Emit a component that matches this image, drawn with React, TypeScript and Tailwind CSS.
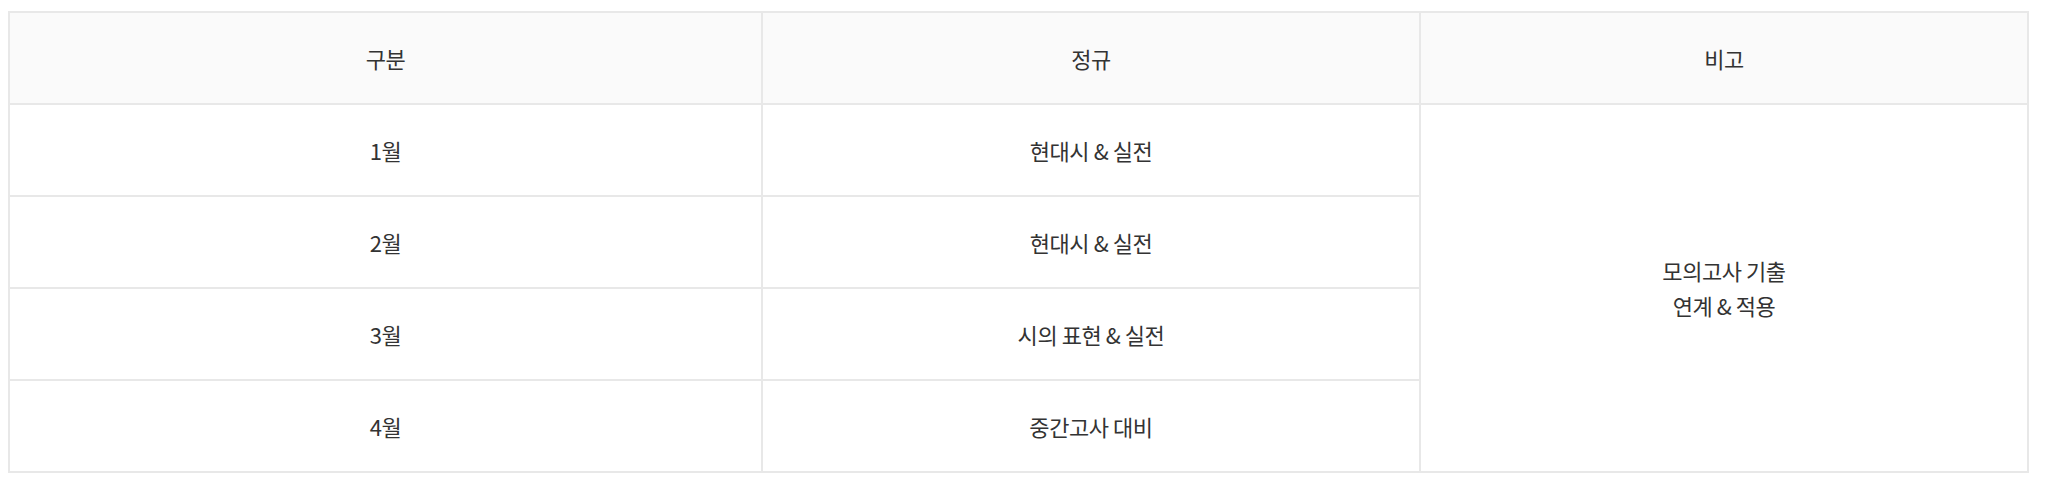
const ROWS = [
  { month: "1월", regular: "현대시 & 실전" },
  { month: "2월", regular: "현대시 & 실전" },
  { month: "3월", regular: "시의 표현 & 실전" },
  { month: "4월", regular: "중간고사 대비" },
];

export default function App() {
  return (
    <div
      className="w-full bg-white pl-[8px] pr-[21px] pt-[11px]"
      style={{ fontFamily: '"Noto Sans CJK KR", "Noto Sans", sans-serif' }}
    >
      <table className="w-[2019px] table-fixed border-collapse border-2 border-[#e8e8e8] text-[22px] leading-[35px] tracking-[-0.02em] text-[#333333]">
        <colgroup>
          <col className="w-[753px]" />
          <col className="w-[658px]" />
          <col className="w-[608px]" />
        </colgroup>
        <thead>
          <tr className="h-[92px] bg-[#fafafa]">
            <th className="border-2 border-[#e8e8e8] font-normal text-center">구분</th>
            <th className="border-2 border-[#e8e8e8] font-normal text-center">정규</th>
            <th className="border-2 border-[#e8e8e8] font-normal text-center">비고</th>
          </tr>
        </thead>
        <tbody>
          {ROWS.map((r, i) => (
            <tr key={r.month} className="h-[92px]">
              <td className="border-2 border-[#e8e8e8] text-center">{r.month}</td>
              <td className="border-2 border-[#e8e8e8] text-center">{r.regular}</td>
              {i === 0 && (
                <td rowSpan={4} className="border-2 border-[#e8e8e8] text-center align-middle">
                  모의고사 기출
                  <br />
                  연계 &amp; 적용
                </td>
              )}
            </tr>
          ))}
        </tbody>
      </table>
    </div>
  );
}
